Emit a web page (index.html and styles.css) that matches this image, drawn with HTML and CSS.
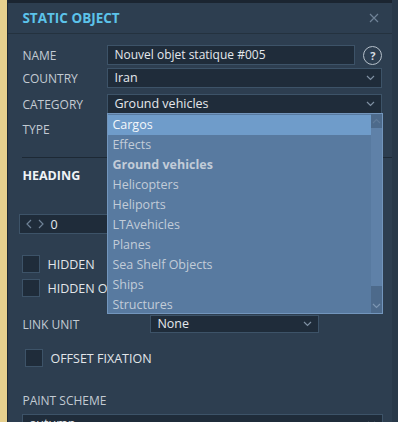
FILE: index.html
```html
<!DOCTYPE html>
<html lang="en">
<head>
    <meta charset="UTF-8">
    <title>Static Object</title>
    <link rel="stylesheet" href="styles.css">
</head>
<body>
    <div class="screen">
        <div class="side-strip"></div>
        <div class="panel">
            <div class="panel-header">
                <span class="panel-title">STATIC OBJECT</span>
                <svg class="close" width="10" height="10" viewBox="0 0 10 10">
                    <path d="M1 1 L9 9 M9 1 L1 9" stroke="#6f8296" stroke-width="1.2" fill="none"/>
                </svg>
            </div>

            <div class="panel-body">
                <div class="row row-name">
                    <span class="label">NAME</span>
                    <div class="field field-name">Nouvel objet statique #005</div>
                    <span class="help">?</span>
                </div>
                <div class="row row-country">
                    <span class="label">COUNTRY</span>
                    <div class="field select">Iran
                        <svg class="chevron" width="9" height="6" viewBox="0 0 9 6"><path d="M1 1 L4.5 4.5 L8 1" stroke="#7f90a2" stroke-width="1.2" fill="none"/></svg>
                    </div>
                </div>
                <div class="row row-category">
                    <span class="label">CATEGORY</span>
                    <div class="field select">Ground vehicles
                        <svg class="chevron" width="9" height="6" viewBox="0 0 9 6"><path d="M1 1 L4.5 4.5 L8 1" stroke="#7f90a2" stroke-width="1.2" fill="none"/></svg>
                    </div>
                </div>
                <div class="row row-type">
                    <span class="label">TYPE</span>
                </div>

                <div class="separator"></div>
                <div class="section-title">HEADING</div>

                <div class="heading-input">
                    <svg width="20" height="10" viewBox="0 0 20 10"><path d="M5 1 L1 5 L5 9 M13 1 L17 5 L13 9" stroke="#6f8296" stroke-width="1.2" fill="none"/></svg>
                    <span>0</span>
                </div>

                <div class="check check-hidden"><span class="box"></span>HIDDEN</div>
                <div class="check check-hidden-map"><span class="box"></span>HIDDEN ON MAP</div>

                <div class="row row-link">
                    <span class="label label-link">LINK UNIT</span>
                    <div class="field select field-link">None
                        <svg class="chevron" width="9" height="6" viewBox="0 0 9 6"><path d="M1 1 L4.5 4.5 L8 1" stroke="#7f90a2" stroke-width="1.2" fill="none"/></svg>
                    </div>
                </div>

                <div class="check check-offset"><span class="box"></span>OFFSET FIXATION</div>

                <div class="label label-paint">PAINT SCHEME</div>
                <div class="field select field-paint">autumn
                    <svg class="chevron" width="9" height="6" viewBox="0 0 9 6"><path d="M1 1 L4.5 4.5 L8 1" stroke="#7f90a2" stroke-width="1.2" fill="none"/></svg>
                </div>
            </div>

            <!-- open category list -->
            <div class="dropdown">
                <ul class="dropdown-list">
                    <li class="active">Cargos</li>
                    <li>Effects</li>
                    <li class="selected">Ground vehicles</li>
                    <li>Helicopters</li>
                    <li>Heliports</li>
                    <li>LTAvehicles</li>
                    <li>Planes</li>
                    <li>Sea Shelf Objects</li>
                    <li>Ships</li>
                    <li>Structures</li>
                </ul>
                <div class="scrollbar">
                    <svg width="9" height="6" viewBox="0 0 9 6"><path d="M1 5 L4.5 1.5 L8 5" stroke="#5f7a98" stroke-width="1.2" fill="none"/></svg>
                    <div class="thumb"></div>
                    <svg class="scroll-down" width="9" height="6" viewBox="0 0 9 6"><path d="M1 1 L4.5 4.5 L8 1" stroke="#7d96b2" stroke-width="1.2" fill="none"/></svg>
                </div>
            </div>
        </div>
        <div class="edge"></div>
    </div>
</body>
</html>
```

FILE: styles.css
```css
body {
    margin: 0;
    font-family: "Open Sans", "Noto Sans", sans-serif;
    font-size: 12px;
    background-color: #22303f;
    overflow: hidden;
}
.screen {
    display: flex;
    height: 422px;
}
.side-strip {
    width: 8px;
    background-color: #e6d08e;
    border-right: 1px solid #1c2733;
}
.panel {
    position: relative;
    flex: 1;
    background-color: #2d3e50;
    border-top: 3px solid #1b2531;
}
.edge {
    width: 6px;
    background-color: #283849;
}
.panel-header {
    height: 30px;
    display: flex;
    align-items: center;
    justify-content: space-between;
    padding: 0 13px 0 14px;
    border-bottom: 1px solid #24323f;
}
.panel-title {
    color: #5cc3ea;
    font-weight: bold;
    font-size: 13.5px;
}
.panel-body {
    padding: 11px 0 0 14px;
}
.label {
    color: #c3cbd3;
    width: 85px;
    flex-shrink: 0;
}
.row {
    display: flex;
    align-items: center;
    height: 20px;
}
.row-country {
    margin-top: 3px;
}
.row-category {
    margin-top: 6px;
}
.row-type {
    margin-top: 5px;
}
.field {
    box-sizing: border-box;
    height: 20px;
    line-height: 18px;
    padding: 0 6px;
    background-color: #1f2c3a;
    border: 1px solid #3d5368;
    color: #e4e8ec;
    font-size: 12.5px;
}
.field-name {
    width: 248px;
    font-size: 12px;
}
.select {
    position: relative;
    width: 275px;
}
.chevron {
    position: absolute;
    right: 6px;
    top: 6px;
}
.help {
    width: 17px;
    height: 17px;
    margin-left: 8px;
    border: 1.5px solid #b6c0ca;
    border-radius: 50%;
    color: #d8dee4;
    font-weight: bold;
    font-size: 11px;
    line-height: 17px;
    text-align: center;
}
.separator {
    margin-top: 18px;
    width: 370px;
    border-top: 1px solid #1d2935;
}
.section-title {
    margin-top: 9px;
    color: #f0f3f6;
    font-weight: bold;
    font-size: 12.5px;
}
.heading-input {
    display: flex;
    align-items: center;
    gap: 4px;
    box-sizing: border-box;
    margin: 30px 0 0 -3px;
    width: 200px;
    height: 20px;
    padding-left: 6px;
    background-color: #1f2c3a;
    border: 1px solid #3d5368;
    color: #e4e8ec;
    font-size: 12.5px;
}
.check {
    display: flex;
    align-items: center;
    gap: 7px;
    color: #e2e6ea;
    font-size: 12.5px;
}
.box {
    box-sizing: border-box;
    width: 18px;
    height: 18px;
    background-color: #1f2c3a;
    border: 1px solid #3d5368;
}
.check-hidden {
    margin-top: 21px;
}
.check-hidden-map {
    margin-top: 6px;
}
.row-link {
    margin-top: 18px;
    height: 18px;
}
.label-link {
    width: 128px;
}
.field-link {
    width: 169px;
    height: 18px;
    line-height: 16px;
}
.field-link .chevron {
    top: 5px;
}
.check-offset {
    margin: 16px 0 0 3px;
}
.label-paint {
    margin-top: 25px;
}
.field-paint {
    margin-top: 5px;
    width: 361px;
}
.dropdown {
    position: absolute;
    left: 99px;
    top: 110px;
    width: 276px;
    height: 201px;
    box-sizing: border-box;
    display: flex;
    background-color: #587aa0;
    border: 1px solid #7396bd;
}
.dropdown-list {
    flex: 1;
    list-style: none;
    margin: 0;
    padding: 1px 0 0;
}
.dropdown-list li {
    height: 20px;
    line-height: 20px;
    padding-left: 4px;
    color: #c2ccd8;
    font-size: 12.5px;
}
.dropdown-list li.active {
    background-color: #6f9cca;
    color: #f4f7fa;
}
.dropdown-list li.selected {
    font-weight: bold;
}
.scrollbar {
    width: 11px;
    display: flex;
    flex-direction: column;
    align-items: center;
    background-color: #4d6a8b;
}
.scrollbar svg {
    margin: 4px 0;
}
.thumb {
    width: 100%;
    height: 158px;
    background-color: #5f81a8;
}
.scroll-down {
    margin-top: auto !important;
}
```
